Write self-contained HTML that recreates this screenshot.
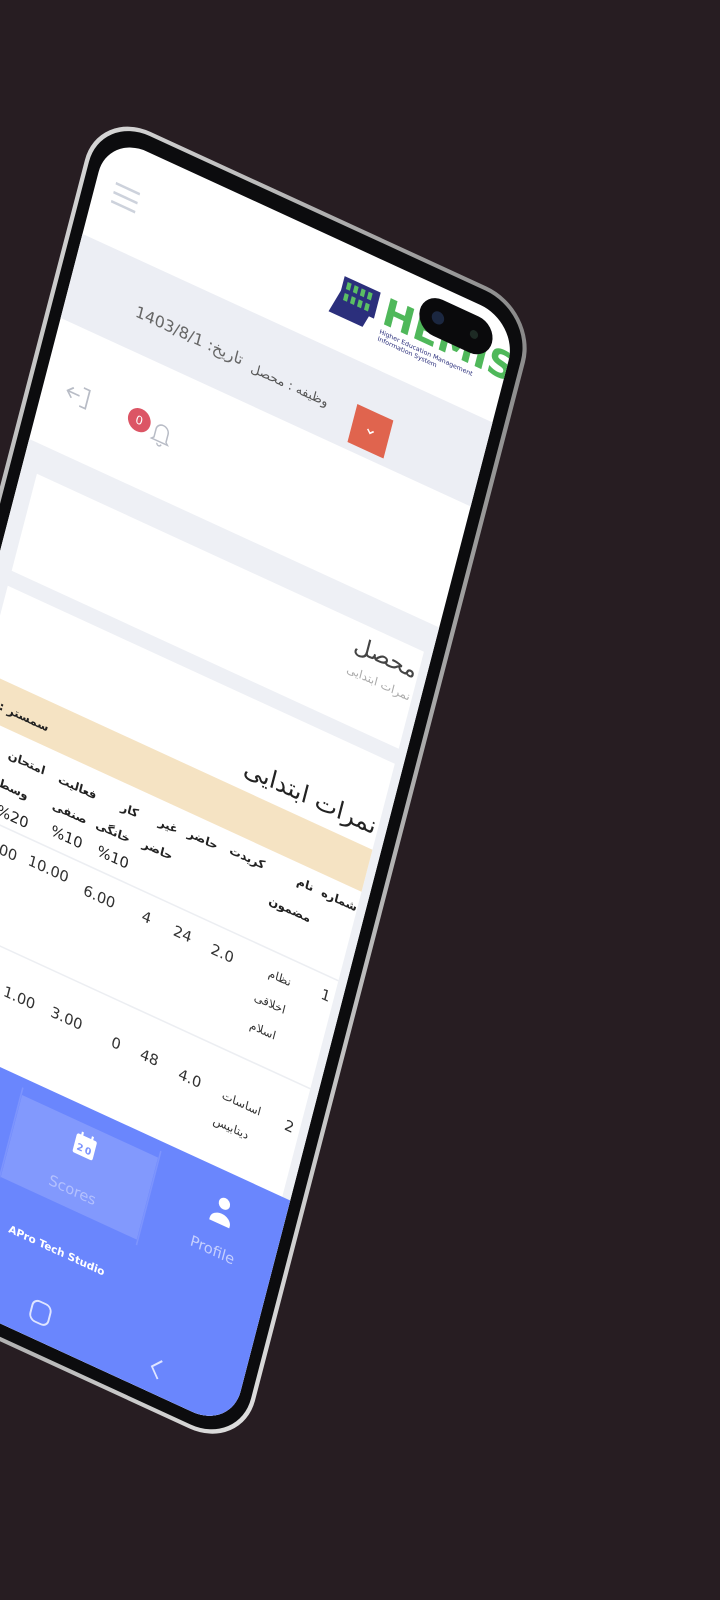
<!DOCTYPE html>
<html><head><meta charset="utf-8">
<style>
html,body{margin:0;padding:0;background:#271d22;}
svg{display:block}
text{font-family:"DejaVu Sans","Liberation Sans",sans-serif;}
</style></head>
<body>
<svg width="720" height="1600" viewBox="0 0 720 1600" xmlns="http://www.w3.org/2000/svg">
<defs>
<linearGradient id="fr" x1="0" y1="0" x2="1" y2="1">
<stop offset="0" stop-color="#d8d8d8"/><stop offset="0.5" stop-color="#8a8a8a"/><stop offset="1" stop-color="#e0e0e0"/>
</linearGradient>
<clipPath id="scr"><rect x="128" y="75" width="410" height="1107" rx="38"/></clipPath>
</defs>
<rect width="720" height="1600" fill="#271d22"/>
<g transform="matrix(1,0.46,-0.26,1,0,0)">
<rect x="113" y="56" width="440" height="1142" rx="52" fill="url(#fr)"/>
<rect x="117" y="60" width="432" height="1134" rx="48" fill="#0c0c0e"/>
<rect x="128" y="75" width="410" height="1107" rx="38" fill="#fff"/>
<g clip-path="url(#scr)">
<g stroke="#cdd2dc" stroke-width="2.5">
<line x1="146" y1="116" x2="170" y2="116"/><line x1="146" y1="125" x2="170" y2="125"/><line x1="146" y1="134" x2="170" y2="134"/>
</g>
<g transform="translate(388,127)">
<rect x="-18" y="-10" width="34" height="26" fill="#2b2f7c" transform="skewX(-15)"/>
<rect x="-16" y="-22" width="36" height="26" fill="#2b2f7c"/>
<g fill="#5bbf63"><rect x="-12" y="-18" width="4" height="7"/><rect x="-5" y="-18" width="4" height="7"/><rect x="2" y="-18" width="4" height="7"/><rect x="9" y="-18" width="4" height="7"/>
<rect x="-12" y="-7" width="4" height="7"/><rect x="-5" y="-7" width="4" height="7"/><rect x="2" y="-7" width="4" height="7"/><rect x="9" y="-7" width="4" height="7"/></g>
</g>
<text x="415" y="132" font-size="36" font-weight="bold" fill="#4fb85a" font-family="Liberation Sans">HEMIS</text>
<text x="416" y="142" font-size="6" fill="#2b2f7c" font-family="Liberation Sans">Higher Education Management</text>
<text x="416" y="149" font-size="6" fill="#2b2f7c" font-family="Liberation Sans">Information System</text>
<rect x="447" y="86" width="72" height="36" rx="18" fill="#0a0a0c"/>
<circle cx="465" cy="104" r="6" fill="#1b2740"/><circle cx="501" cy="104" r="4" fill="#1d2a24"/>
<rect x="120" y="175" width="430" height="84" fill="#eceef4"/>
<text x="247" y="227" font-size="15" fill="#666" text-anchor="middle">1403/8/1 :تاریخ</text>
<text x="348" y="229" font-size="12" fill="#555" text-anchor="middle">وظیفه : محصل</text>
<rect x="413" y="214" width="36" height="38" fill="#e0644e"/>
<path d="M428 232 l3 3 l3 -3" stroke="#fff" stroke-width="1.5" fill="none"/>
<path d="M165 312 h6 v18 h-6 M151 321 h12 M156 316 l-5 5 l5 5" stroke="#b8bcc6" stroke-width="1.6" fill="none"/>
<circle cx="222" cy="318" r="11" fill="#dc5565"/>
<text x="222" y="322" font-size="11" fill="#fff" text-anchor="middle" font-family="Liberation Sans">0</text>
<path d="M239 327 v-8 a6 6 0 0 1 12 0 v8 l2 2 h-16 z M243 331 a2 2 0 0 0 4 0" stroke="#b8bcc6" stroke-width="1.4" fill="none"/>
<rect x="120" y="380" width="430" height="820" fill="#eef0f5"/>
<rect x="143" y="408" width="387" height="97" fill="#fff"/>
<text x="528" y="436" font-size="22" fill="#444" text-anchor="end">محصل</text>
<text x="528" y="458" font-size="11" fill="#aaa" text-anchor="end">نمرات ابتدایی</text>
<rect x="143" y="520" width="387" height="680" fill="#fff"/>
<text x="528" y="592" font-size="23" fill="#222" text-anchor="end">نمرات ابتدایی</text>
<rect x="143" y="606" width="387" height="42" fill="#f5e3c3"/>
<text x="152" y="634" font-size="11" font-weight="bold" fill="#222">2 : سمستر</text>
<g font-size="11" font-weight="bold" fill="#222" text-anchor="middle">
<text x="512" y="668">شماره</text>
<text x="478" y="668">نام</text><text x="470" y="697">مضمون</text>
<text x="420" y="668">کریدت</text>
<text x="376" y="670">حاضر</text>
<text x="342" y="672">غیر</text><text x="338" y="698">حاضر</text>
<text x="304" y="674">کار</text><text x="294" y="700">خانگی</text><text x="300" y="724" font-size="14" font-weight="normal">%10</text>
<text x="252" y="675">فعالیت</text><text x="251" y="701">صنفی</text><text x="254" y="725" font-size="14" font-weight="normal">%10</text>
<text x="201" y="674">امتحان</text><text x="195" y="703">وسط</text><text x="201" y="729" font-size="14" font-weight="normal">%20</text>
</g>
<line x1="143" y1="737" x2="530" y2="737" stroke="#eceef2" stroke-width="1.5"/>
<g font-size="14" fill="#333" text-anchor="middle">
<text x="194" y="763">20.00</text><text x="245" y="761">10.00</text><text x="297" y="765">6.00</text>
<text x="344" y="764">4</text><text x="380" y="764">24</text><text x="420" y="765">2.0</text>
<text x="522" y="760">1</text>
<text x="249" y="888">1.00</text><text x="296" y="887">3.00</text>
<text x="346" y="889">0</text><text x="379" y="888">48</text><text x="420" y="890">4.0</text>
<text x="520" y="892">2</text>
</g>
<g font-size="11" fill="#333" text-anchor="middle">
<text x="477" y="762">نظام</text><text x="474" y="789">اخلاقی</text><text x="474" y="816">اسلام</text>
<text x="472" y="890">اساسات</text><text x="468" y="916">دیتابیس</text>
</g>
<line x1="143" y1="845" x2="530" y2="845" stroke="#eceef2" stroke-width="1.5"/>
<rect x="120" y="953" width="430" height="250" fill="#6a86fd"/>
<rect x="274" y="969" width="136" height="82" fill="#8299fd"/>
<line x1="273" y1="962" x2="273" y2="1056" stroke="#7d94fd" stroke-width="1.5"/>
<line x1="411" y1="962" x2="411" y2="1056" stroke="#7d94fd" stroke-width="1.5"/>
<g transform="translate(342,990)">
<rect x="-10" y="-10" width="20" height="19" rx="2" fill="#fff"/>
<rect x="-6" y="-13" width="2" height="5" fill="#fff"/><rect x="4" y="-13" width="2" height="5" fill="#fff"/>
<text x="-4" y="5" font-size="9" fill="#7d94fd" text-anchor="middle" font-family="Liberation Sans" font-weight="bold">2</text>
<text x="4" y="5" font-size="9" fill="#7d94fd" text-anchor="middle" font-family="Liberation Sans" font-weight="bold">0</text>
</g>
<text x="341" y="1038" font-size="14" fill="#b3c0fe" text-anchor="middle" font-family="Liberation Sans">Scores</text>
<circle cx="480" cy="983" r="5.5" fill="#fff"/>
<path d="M470 1001 a10 8 0 0 1 20 0 v2 h-20 z" fill="#fff"/>
<text x="480" y="1034" font-size="14" fill="#c5cffe" text-anchor="middle" font-family="Liberation Sans">Profile</text>
<text x="341" y="1097" font-size="10" font-weight="bold" fill="#fff" text-anchor="middle" font-family="Liberation Sans">APro Tech Studio</text>
<rect x="332" y="1146" width="18" height="20" rx="6" fill="none" stroke="#dfe5ff" stroke-width="1.8"/>
<path d="M461 1149 l-8 9 l8 9" fill="none" stroke="#dfe5ff" stroke-width="1.8"/>
</g>
</g>
</svg>
</body></html>
